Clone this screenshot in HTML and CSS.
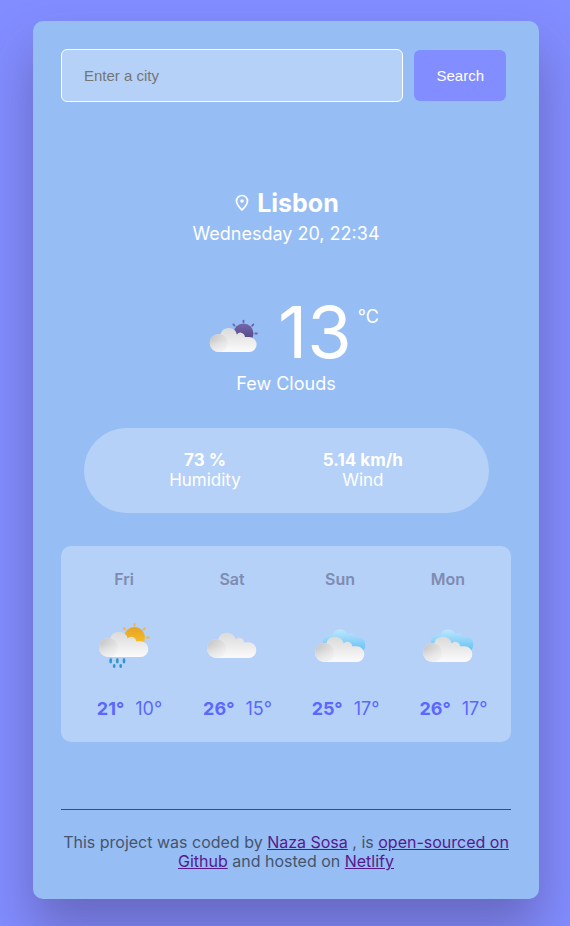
FILE: index.html
```html
<!DOCTYPE html>
<html lang="en">
<head>
  <meta charset="utf-8">
  <meta name="viewport" content="width=device-width, initial-scale=1">
  <title>Weather App</title>
  <link rel="stylesheet" href="styles.css">
</head>
<body>
  <svg class="defs" aria-hidden="true">
    <defs>
      <linearGradient id="cloud-fill" x1="0" y1="15" x2="0" y2="41" gradientUnits="userSpaceOnUse">
        <stop offset="0" stop-color="#d9d9d9"/><stop offset="1" stop-color="#fbfbfb"/>
      </linearGradient>
      <linearGradient id="puff-fill" x1="7" y1="25" x2="23" y2="35" gradientUnits="userSpaceOnUse">
        <stop offset="0" stop-color="#c9c9c9"/><stop offset="1" stop-color="#e9e9e9"/>
      </linearGradient>
      <linearGradient id="puff-fade" x1="0" y1="28" x2="0" y2="41" gradientUnits="userSpaceOnUse">
        <stop offset="0" stop-color="#f8f8f8" stop-opacity="0"/><stop offset="1" stop-color="#f8f8f8" stop-opacity=".7"/>
      </linearGradient>
      <linearGradient id="sun-fill" x1="0" y1="0" x2="0" y2="1">
        <stop offset="0" stop-color="#e5a22a"/><stop offset="1" stop-color="#fdc81c"/>
      </linearGradient>
      <linearGradient id="night-fill" x1="0" y1="0" x2="0" y2="1">
        <stop offset="0" stop-color="#7468ac"/><stop offset="1" stop-color="#4a3f7c"/>
      </linearGradient>
      <linearGradient id="sky-fill" x1="0" y1="13" x2="0" y2="34" gradientUnits="userSpaceOnUse">
        <stop offset="0" stop-color="#bfe7ff"/><stop offset="1" stop-color="#68c3f3"/>
      </linearGradient>
      <g id="cloud">
        <path fill="url(#cloud-fill)" d="M14.5 41A9.5 9.5 0 0 1 14.5 22Q15.400 22 16.300 22.200A9 9 0 0 1 33.600 22.500A4.700 4.700 0 0 1 42 25.300H46.500A7.850 7.850 0 0 1 46.500 41Z"/>
        <circle cx="14.500" cy="31.500" r="9.500" fill="url(#puff-fill)"/>
        <circle cx="14.500" cy="31.500" r="9.500" fill="url(#puff-fade)"/>
      </g>
      <g id="rays" fill="none" stroke-width="2" stroke-linecap="round">
        <path d="M40.500 8V9.500M50.800 12.200L49.800 13.400M53 21.500H54.600M30 12L30.800 13.200"/>
      </g>
    </defs>
  </svg>

  <main class="card">
    <form class="search">
      <input class="search-input" type="text" placeholder="Enter a city" aria-label="City" autocomplete="off">
      <button class="search-button" type="button">Search</button>
    </form>

    <section class="current">
      <h1 class="city">
        <svg class="pin" viewBox="0 0 14 18" aria-hidden="true">
          <path d="M7 1.500A5.500 5.500 0 0 0 1.500 7C1.500 10.200 4.500 13.600 7 16C9.500 13.600 12.500 10.200 12.500 7A5.500 5.500 0 0 0 7 1.500Z" fill="none" stroke="#fff" stroke-width="1.700"/>
          <circle cx="7" cy="7" r="1.800" fill="#fff"/>
        </svg>
        <span>Lisbon</span>
      </h1>
      <p class="date">Wednesday 20, 22:34</p>
      <div class="now">
        <svg class="now-icon" viewBox="0 0 60 60" role="img" aria-label="Few clouds">
          <circle cx="40.500" cy="21.500" r="10.500" fill="url(#night-fill)"/>
          <use href="#rays" stroke="#6d64aa"/>
          <use href="#cloud"/>
        </svg>
        <span class="now-temp">13</span>
        <span class="unit">°C</span>
      </div>
      <p class="description">Few Clouds</p>
    </section>

    <section class="details">
      <div><strong>73 %</strong><br>Humidity</div>
      <div><strong>5.14 km/h</strong><br>Wind</div>
    </section>

    <section class="forecast">
      <article class="day">
        <h2 class="day-name">Fri</h2>
        <svg class="day-icon" viewBox="0 0 60 60" role="img" aria-label="Rain">
          <circle cx="40.500" cy="21.500" r="10.500" fill="url(#sun-fill)"/>
          <use href="#rays" stroke="#f8b62b"/>
          <use href="#cloud"/>
          <g fill="#3494cc">
            <ellipse cx="16.700" cy="44.800" rx="1.400" ry="2.800"/>
            <ellipse cx="23.300" cy="44.800" rx="1.400" ry="2.800"/>
            <ellipse cx="30" cy="44.800" rx="1.400" ry="2.800"/>
            <ellipse cx="20.200" cy="50" rx="1.400" ry="1.900"/>
            <ellipse cx="26.700" cy="50" rx="1.400" ry="1.900"/>
          </g>
        </svg>
        <p class="temps"><strong>21°</strong><span>10°</span></p>
      </article>
      <article class="day">
        <h2 class="day-name">Sat</h2>
        <svg class="day-icon" viewBox="0 0 60 60" role="img" aria-label="Cloudy">
          <use href="#cloud" y="1"/>
        </svg>
        <p class="temps"><strong>26°</strong><span>15°</span></p>
      </article>
      <article class="day">
        <h2 class="day-name">Sun</h2>
        <svg class="day-icon" viewBox="0 0 60 60" role="img" aria-label="Broken clouds">
          <path fill="url(#sky-fill)" d="M13 27A7.500 7.500 0 0 1 22.600 18.800A8 8 0 0 1 37.500 18.500A4.300 4.300 0 0 1 45 21.200H49Q55.300 21.500 55.300 28.500Q55.300 32 53 35H20Z"/>
          <use href="#cloud" y="5"/>
        </svg>
        <p class="temps"><strong>25°</strong><span>17°</span></p>
      </article>
      <article class="day">
        <h2 class="day-name">Mon</h2>
        <svg class="day-icon" viewBox="0 0 60 60" role="img" aria-label="Broken clouds">
          <path fill="url(#sky-fill)" d="M13 27A7.500 7.500 0 0 1 22.600 18.800A8 8 0 0 1 37.500 18.500A4.300 4.300 0 0 1 45 21.200H49Q55.300 21.500 55.300 28.500Q55.300 32 53 35H20Z"/>
          <use href="#cloud" y="5"/>
        </svg>
        <p class="temps"><strong>26°</strong><span>17°</span></p>
      </article>
    </section>

    <footer class="footer">
      This project was coded by <a href="#naza">Naza Sosa</a> , is
      <a href="#github">open-sourced on Github</a> and hosted on
      <a href="#netlify">Netlify</a>
    </footer>
  </main>
</body>
</html>
```
FILE: styles.css
```css
* {
  box-sizing: border-box;
}

body {
  margin: 0;
  padding: 21px 31px 27px 33px;
  background: #828dff;
  font-family: Inter, "Liberation Sans", sans-serif;
  color: #fff;
}

h1,
h2,
p {
  margin: 0;
}

.defs {
  position: absolute;
  width: 0;
  height: 0;
}

.card {
  max-width: 600px;
  margin: 0 auto;
  padding: 28px;
  border-radius: 10px;
  background: #96bef4;
  box-shadow: 0 30px 50px rgba(65, 50, 100, 0.4);
}

.search {
  display: flex;
  align-items: center;
  gap: 11px;
  padding-right: 5px;
}

.search-input,
.search-button {
  border-radius: 6px;
  font-family: "Liberation Sans", Arial, sans-serif;
  font-size: 15px;
  line-height: 17px;
}

.search-input {
  flex: 1;
  min-width: 0;
  padding: 17px 22px;
  border: 1px solid #fff;
  background: rgba(255, 255, 255, 0.3);
  height: 53px;
}

.search-input::placeholder {
  color: #757575;
}

.search-button {
  padding: 17px 22px;
  border: 0;
  background: #828dff;
  color: #fff;
}

.current {
  margin-top: 86px;
  text-align: center;
}

.city {
  display: flex;
  justify-content: center;
  align-items: center;
  gap: 8px;
  padding-left: 2px;
  font-size: 25px;
  line-height: 30px;
}

.pin {
  width: 14px;
  height: 18px;
}

.date,
.description {
  font-size: 18px;
  line-height: 22px;
}

.date {
  margin-top: 5px;
}

.now {
  display: flex;
  justify-content: center;
  align-items: flex-start;
  margin-top: 46px;
  padding-left: 12px;
}

.now-icon {
  width: 57px;
  height: 57px;
  margin: 22px 16px 0 0;
}

.now-temp {
  font-size: 72px;
  line-height: 82px;
}

.unit {
  margin: 15px 0 0 6px;
  font-size: 18px;
  line-height: 22px;
}

.details {
  display: flex;
  justify-content: center;
  gap: 82px;
  width: 90%;
  margin: 33px auto 0;
  padding: 22px 0 23px;
  border-radius: 50px;
  background: rgba(255, 255, 255, 0.3);
  font-size: 17px;
  line-height: 20px;
  text-align: center;
}

.forecast {
  display: grid;
  grid-template-columns: repeat(4, 1fr);
  margin-top: 33px;
  padding: 23px 9px 22px;
  border-radius: 10px;
  background: rgba(255, 255, 255, 0.3);
}

.day {
  text-align: center;
}

.day-name {
  color: #7f8bb0;
  font-size: 16px;
  font-weight: 600;
  line-height: 20px;
}

.day-icon {
  display: block;
  width: 60px;
  height: 60px;
  margin: 27px auto 22px;
}

.temps {
  display: flex;
  justify-content: center;
  gap: 11px;
  padding-left: 11px;
  color: #5b67ff;
  font-size: 18px;
  line-height: 22px;
}

.temps strong {
  font-weight: 700;
}

.footer {
  margin-top: 67px;
  padding-top: 23px;
  border-top: 1px solid #3e4c66;
  color: #46546d;
  font-size: 16px;
  line-height: 19px;
  text-align: center;
}

.footer a {
  color: #551a8b;
}
```
